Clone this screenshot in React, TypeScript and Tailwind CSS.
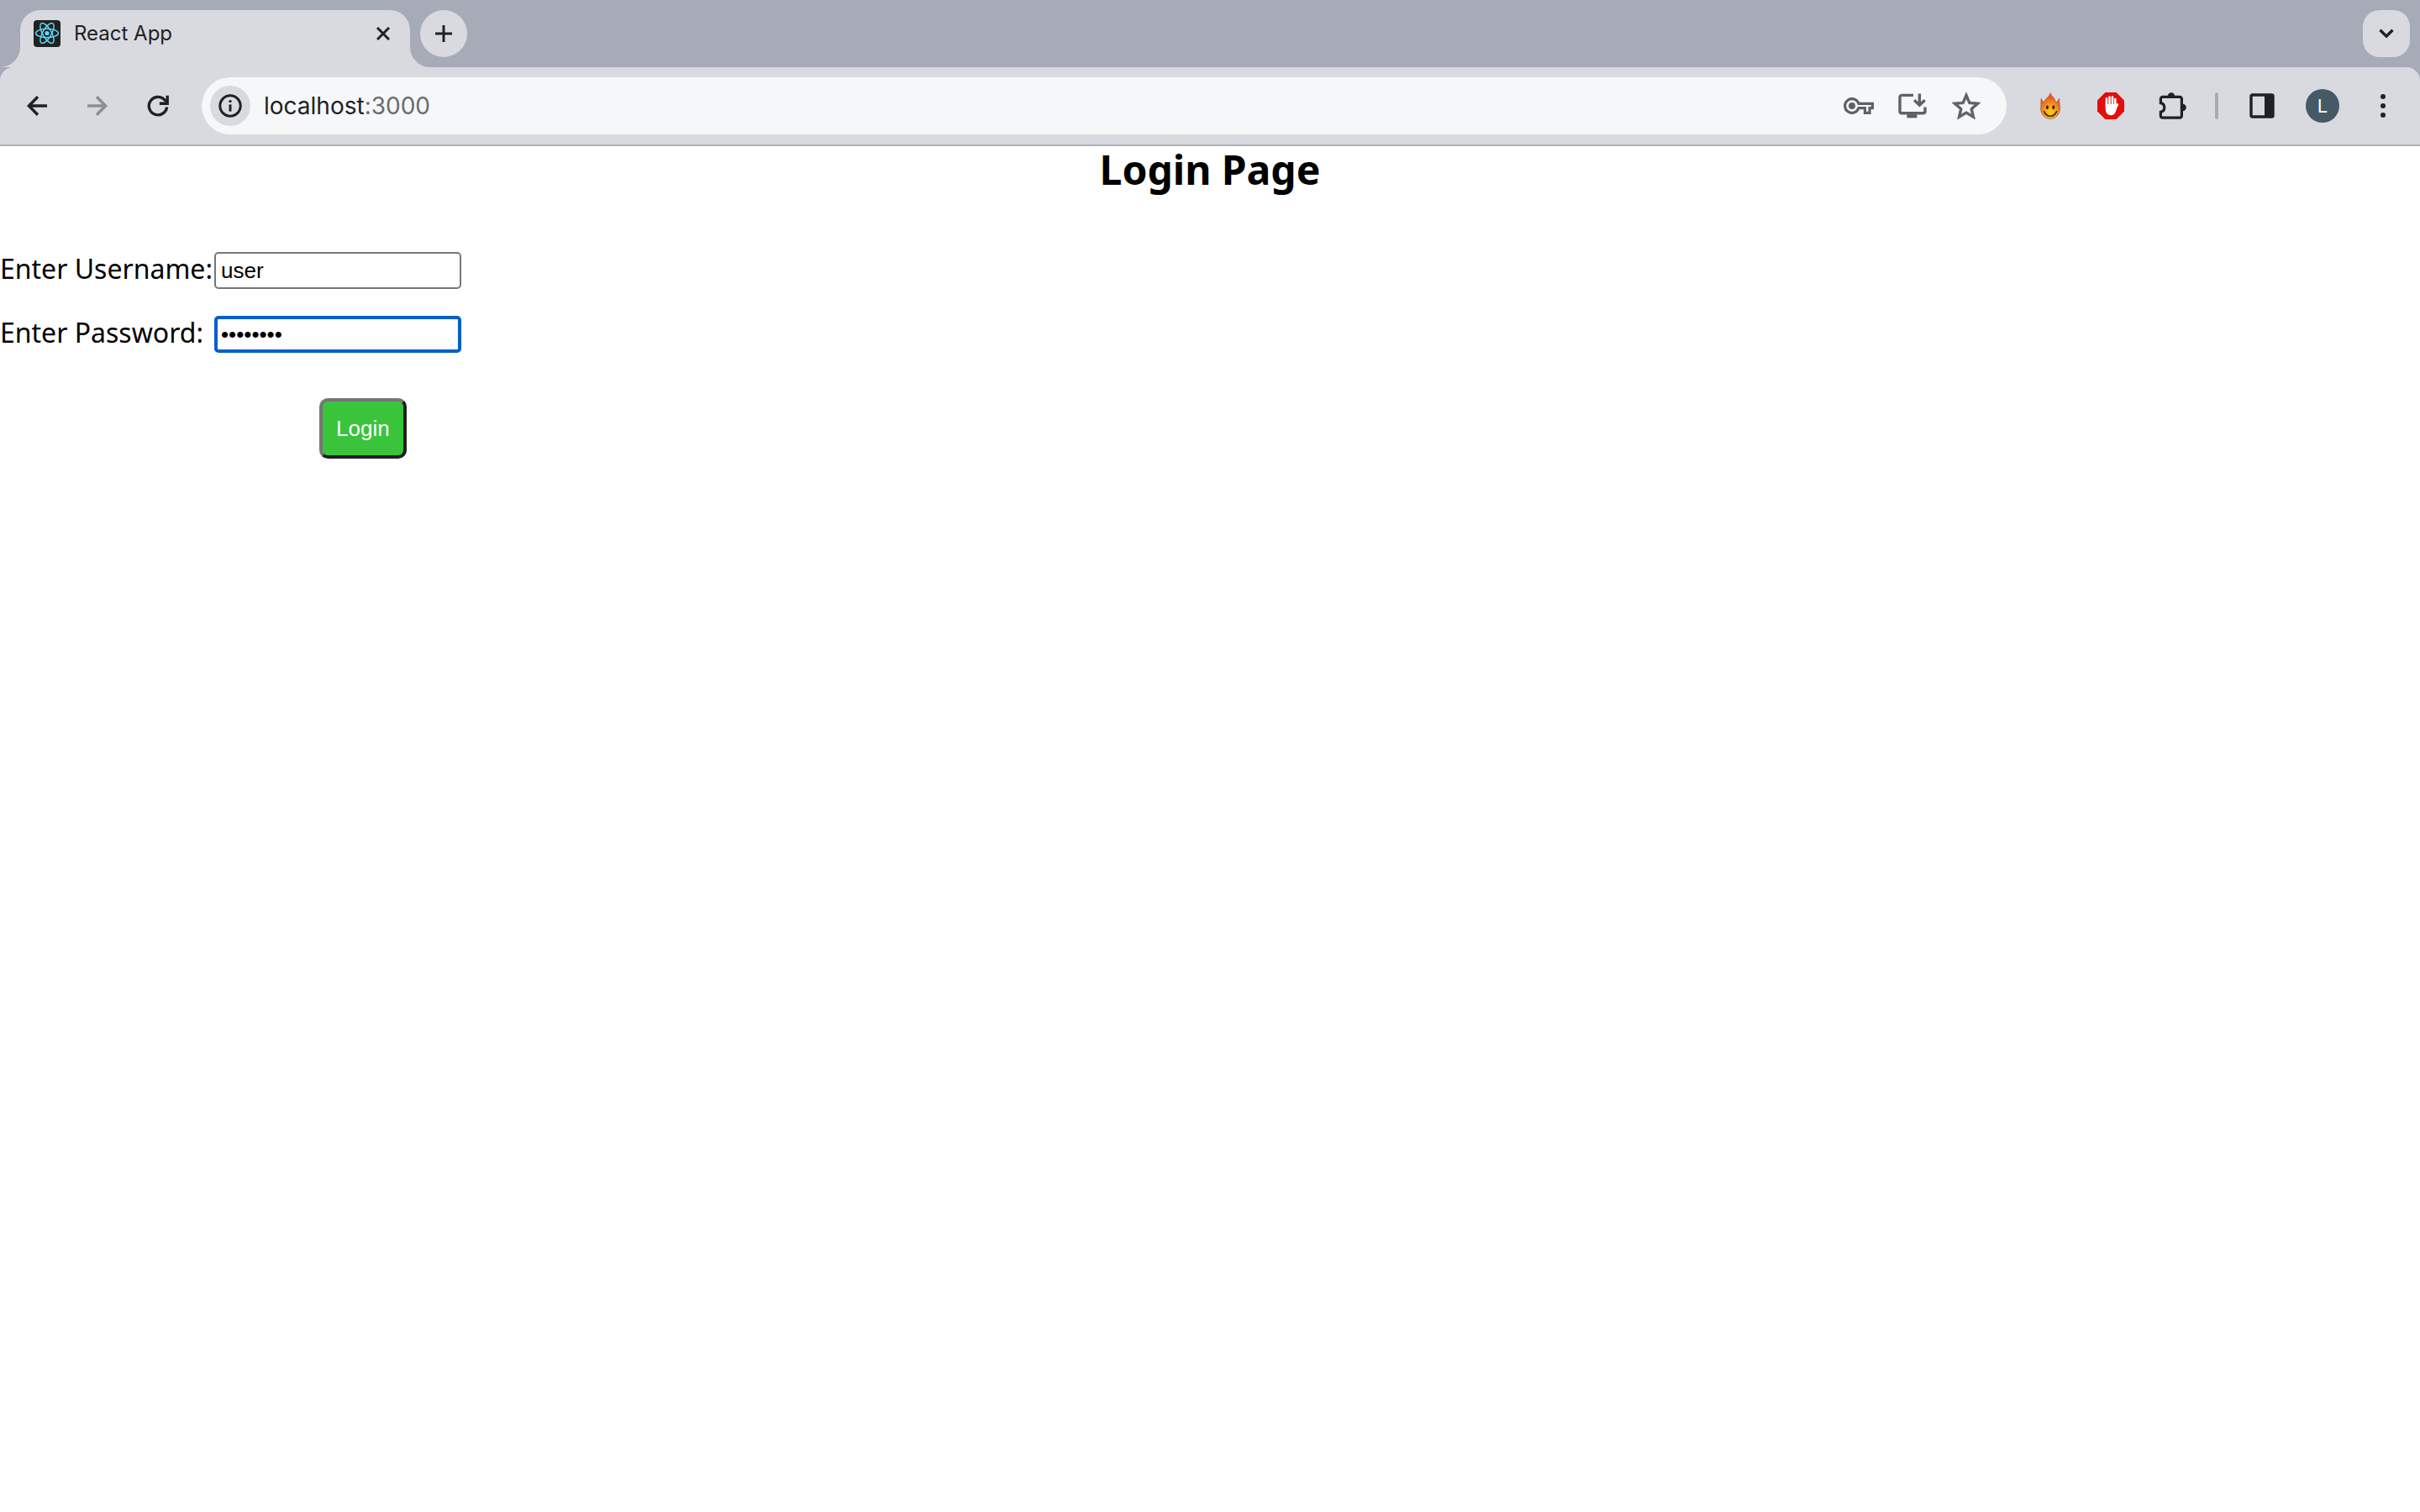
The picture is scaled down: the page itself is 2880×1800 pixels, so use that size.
import React, { useState } from "react";

const svgProps = {
  xmlns: "http://www.w3.org/2000/svg",
  fill: "none",
  "aria-hidden": true,
} as const;

function ReactLogo() {
  return (
    <svg {...svgProps} viewBox="0 0 32 32" className="size-8 shrink-0">
      <rect width="32" height="32" rx="4" fill="#222222" />
      <g stroke="#61dafb" strokeWidth="1.4">
        <ellipse cx="16" cy="15.5" rx="13.5" ry="5.2" />
        <ellipse cx="16" cy="15.5" rx="13.5" ry="5.2" transform="rotate(60 16 15.5)" />
        <ellipse cx="16" cy="15.5" rx="13.5" ry="5.2" transform="rotate(120 16 15.5)" />
      </g>
      <circle cx="16" cy="15.5" r="2.6" fill="#61dafb" />
    </svg>
  );
}

function BackIcon() {
  return (
    <svg {...svgProps} viewBox="0 0 24 24" className="size-6" stroke="currentColor" strokeWidth="3.4">
      <path d="M24 12H3M13 1.2 2.4 12 13 22.8" />
    </svg>
  );
}

function ForwardIcon() {
  return (
    <svg {...svgProps} viewBox="0 0 24 24" className="size-6" stroke="currentColor" strokeWidth="3.4">
      <path d="M0 12h21M11 1.2 21.6 12 11 22.8" />
    </svg>
  );
}

function ReloadIcon() {
  return (
    <svg {...svgProps} viewBox="0 0 26 26" className="size-6.5" stroke="currentColor" strokeWidth="3.4">
      <path d="M23.6 14.5A10.7 10.7 0 1 1 20.6 5.6L24 9.2" />
      <path d="M24.2 .8v9.4H14.8" />
    </svg>
  );
}

function InfoIcon() {
  return (
    <svg {...svgProps} viewBox="0 0 28 28" className="size-7">
      <circle cx="14" cy="14" r="12.2" stroke="currentColor" strokeWidth="3" />
      <circle cx="14" cy="8.6" r="1.7" fill="currentColor" />
      <path d="M14 12.4v8.2" stroke="currentColor" strokeWidth="3" />
    </svg>
  );
}

function KeyIcon() {
  return (
    <svg {...svgProps} viewBox="0 0 36 20" className="h-5 w-9">
      <path
        d="M18 7.400A8.400 8.400 0 1 0 18 12.600H25.400V18.400H31V12.600H34.400V7.400Z"
        stroke="currentColor"
        strokeWidth="3.200"
      />
      <circle cx="10" cy="10" r="4" fill="currentColor" />
    </svg>
  );
}

function InstallIcon() {
  return (
    <svg {...svgProps} viewBox="0 0 34 30" className="h-7.5 w-8.5">
      <path d="M18 2.4H4.4a2.4 2.4 0 0 0-2.4 2.4V21.4a2.4 2.4 0 0 0 2.4 2.4H29.6a2.4 2.4 0 0 0 2.4-2.4V16.6" stroke="currentColor" strokeWidth="3.4" />
      <path d="M10.400 24h12v5.400h-12z" fill="currentColor" />
      <path d="M25.400 .4v13M19.200 8.200l6.200 6 6.400-6" stroke="currentColor" strokeWidth="3.400" />
    </svg>
  );
}

function StarIcon() {
  return (
    <svg {...svgProps} viewBox="2 2 20 19" className="h-8 w-8.5" preserveAspectRatio="none">
      <path
        d="M22 9.24l-7.19-.62L12 2 9.19 8.63 2 9.24l5.46 4.73L5.82 21 12 17.27 18.18 21l-1.63-7.03L22 9.24zM12 15.4l-3.76 2.27 1-4.28-3.32-2.88 4.38-.38L12 6.1l1.71 4.04 4.38.38-3.32 2.88 1 4.28L12 15.4z"
        fill="currentColor"
        stroke="currentColor"
        strokeWidth=".4"
      />
    </svg>
  );
}

function FlameIcon() {
  return (
    <svg {...svgProps} viewBox="0 0 26 32" className="h-8 w-6.5">
      <defs>
        <radialGradient id="flame" cx="0.5" cy="0.78" r="0.66">
          <stop offset="0" stopColor="#ffd012" />
          <stop offset="0.5" stopColor="#fb9a1c" />
          <stop offset="1" stopColor="#e2501c" />
        </radialGradient>
      </defs>
      <path
        d="M13.200 .6C13.600 4.600 19 6 19.400 12.200C21.600 11 22.600 9.200 23.600 7C23.800 10.600 24 12.600 24.400 15.400C25.800 24.600 20.600 31.400 13 31.400S.6 24.600 1.800 16.400C2.200 13.400 1.600 10.600 2.200 7C3 9.200 3.800 10.600 5.600 11.800C7.200 6.600 12.200 5.400 13.200 .6Z"
        fill="url(#flame)"
        stroke="#9a6448"
        strokeWidth=".7"
      />
      <ellipse cx="9.400" cy="17.800" rx="1.500" ry="2.400" fill="#222" />
      <ellipse cx="16.800" cy="17.800" rx="1.500" ry="2.400" fill="#222" />
      <path d="M5.600 22.600c3 7.400 12 7.400 15 0" stroke="#3a2410" strokeWidth="1.500" strokeLinecap="round" />
    </svg>
  );
}

function BlockerIcon() {
  return (
    <svg {...svgProps} viewBox="0 0 32 32" className="size-8">
      <path d="M9.400 0h13.200L32 9.400v13.200L22.600 32H9.400L0 22.600V9.400Z" fill="#e40d0d" />
      <g stroke="#fff" strokeWidth="2.600" strokeLinecap="round">
        <path d="M11 17V7.400M14.500 16V5.600M18 16V5.600M21.300 17V8M21 20.500l3-6.200" />
      </g>
      <path d="M9.700 14h12.900l.6 3c-.6 5.600-2.600 10.200-6.800 10.200-4.600 0-6.700-3.600-6.700-8Z" fill="#fff" />
    </svg>
  );
}

function PuzzleIcon() {
  return (
    <svg {...svgProps} viewBox="0 0 34 34" className="size-8.5">
      <path
        d="M4.600 6.400H25.200a2.200 2.200 0 0 1 2.200 2.200V29a2.200 2.200 0 0 1-2.200 2.200H4.600A2.200 2.200 0 0 1 2.400 29V24.200a5.400 5.400 0 0 0 0-10.600V8.600A2.200 2.200 0 0 1 4.600 6.400Z"
        stroke="currentColor"
        strokeWidth="3.200"
      />
      <path d="M10.800 5.400a4.200 4.200 0 0 1 8.400 0ZM28.600 14.800a4.200 4.200 0 0 1 0 8.400Z" fill="currentColor" />
    </svg>
  );
}

function SidePanelIcon() {
  return (
    <svg {...svgProps} viewBox="0 0 30 30" className="size-7.5">
      <rect x="2" y="2" width="26" height="26" rx="1.500" stroke="currentColor" strokeWidth="3.400" />
      <path d="M18 2h10v26H18z" fill="currentColor" />
    </svg>
  );
}

function IconButton({ label, children, className = "" }: { label: string; children: React.ReactNode; className?: string }) {
  return (
    <button type="button" aria-label={label} className={`flex size-14 shrink-0 items-center justify-center rounded-full ${className}`}>
      {children}
    </button>
  );
}

function TabStrip() {
  return (
    <div className="flex h-20 items-start bg-[#a7abb7] pt-3 pr-3">
      <div className="flex h-17 w-6 shrink-0 items-end bg-[#d9dadf]">
        <div className="h-full w-full rounded-br-3xl bg-[#a7abb7]" />
      </div>
      <div className="flex h-17 w-[464px] items-center rounded-t-3xl bg-[#d9dadf] pr-5 pb-3 pl-4">
        <ReactLogo />
        <span className="ml-4 flex-1 text-2xl text-[#202124]">React App</span>
        <button type="button" aria-label="Close tab" className="flex size-6 items-center justify-center text-[#202124]">
          <svg {...svgProps} viewBox="0 0 16 16" className="size-4" stroke="currentColor" strokeWidth="3">
            <path d="M1 1l14 14M15 1 1 15" />
          </svg>
        </button>
      </div>
      <div className="h-17 w-3 shrink-0 bg-[#a7abb7]">
        <svg {...svgProps} viewBox="0 0 24 68" className="h-17 w-6">
          <path d="M0 44v24h24A24 24 0 0 1 0 44Z" fill="#d9dadf" />
        </svg>
      </div>
      <IconButton label="New tab" className="bg-[#d9dadf] text-[#202124]">
        <svg {...svgProps} viewBox="0 0 20 20" className="size-5" stroke="currentColor" strokeWidth="3">
          <path d="M10 0v20M0 10h20" />
        </svg>
      </IconButton>
      <button type="button" aria-label="Search tabs" className="ml-auto flex size-14 items-center justify-center rounded-[20px] bg-[#d9dadf] text-[#202124]">
        <svg {...svgProps} viewBox="0 0 18 12" className="h-3 w-4.5" stroke="currentColor" strokeWidth="3.400">
          <path d="M1.500 1.700 9 9.200l7.500-7.500" />
        </svg>
      </button>
    </div>
  );
}

function Toolbar() {
  const [url, setUrl] = useState("localhost:3000");
  const [host, ...rest] = url.split(":");
  return (
    <div className="bg-[#a7abb7]">
      <div className="flex h-[94px] items-center rounded-t-2xl border-b-2 border-[#adafb4] bg-[#d9dadf] pr-4 pl-4 text-[#202124]">
        <div className="flex gap-4">
          <IconButton label="Back"><BackIcon /></IconButton>
          <IconButton label="Forward" className="text-[#8c8e92]"><ForwardIcon /></IconButton>
          <IconButton label="Reload"><ReloadIcon /></IconButton>
        </div>
        <div className="ml-6 flex h-17 flex-1 items-center rounded-full bg-[#f5f7f9] pr-5 pl-2.5">
          <button type="button" aria-label="Site information" className="flex size-12 items-center justify-center rounded-full bg-[#d9dadf]">
            <InfoIcon />
          </button>
          <div className="relative ml-4 flex-1 text-[28px]">
            <div aria-hidden="true">
              {host}
              <span className="text-[#6a6c70]">{rest.length > 0 ? ":" + rest.join(":") : ""}</span>
            </div>
            <input
              aria-label="Address"
              value={url}
              onChange={(e) => setUrl(e.target.value)}
              className="absolute inset-0 w-full bg-transparent text-transparent caret-black outline-none"
            />
          </div>
          <div className="flex gap-2 text-[#5f6165]">
            <IconButton label="Passwords"><KeyIcon /></IconButton>
            <IconButton label="Install app"><InstallIcon /></IconButton>
            <IconButton label="Bookmark"><StarIcon /></IconButton>
          </div>
        </div>
        <div className="ml-6 flex items-center">
          <div className="flex gap-4">
            <IconButton label="Flame extension"><FlameIcon /></IconButton>
            <IconButton label="Ad blocker"><BlockerIcon /></IconButton>
            <IconButton label="Extensions" className="pl-1"><PuzzleIcon /></IconButton>
          </div>
          <div className="mx-6 h-8 w-1 rounded-full bg-[#a7abb7]" />
          <div className="flex gap-4">
            <IconButton label="Side panel"><SidePanelIcon /></IconButton>
            <IconButton label="Profile">
              <span className="flex size-10 items-center justify-center rounded-full bg-[#455a64] text-[22px] text-white">L</span>
            </IconButton>
            <IconButton label="Menu">
              <svg {...svgProps} viewBox="0 0 6 28" className="h-7 w-1.5" fill="currentColor">
                <circle cx="3" cy="3" r="3" />
                <circle cx="3" cy="14" r="3" />
                <circle cx="3" cy="25" r="3" />
              </svg>
            </IconButton>
          </div>
        </div>
      </div>
    </div>
  );
}

function LoginPage() {
  const [username, setUsername] = useState("user");
  const [password, setPassword] = useState("password");
  return (
    <main className="font-['Noto_Sans',sans-serif] text-black">
      <h1 className="text-center text-5xl leading-14 font-bold">Login Page</h1>
      <form className="mt-[70px]" onSubmit={(e) => e.preventDefault()}>
        <div className="grid grid-cols-[255px_294px] items-start gap-y-8">
          <label htmlFor="username" className="text-[32px] leading-10 whitespace-nowrap">Enter Username:</label>
          <input
            id="username"
            type="text"
            value={username}
            onChange={(e) => setUsername(e.target.value)}
            className="h-11 rounded-[5px] border-2 border-[#767676] bg-white px-1.5 font-['Liberation_Sans',sans-serif] text-[26px] outline-none"
          />
          <label htmlFor="password" className="text-[32px] leading-10 whitespace-nowrap">Enter Password:</label>
          <input
            id="password"
            type="password"
            value={password}
            onChange={(e) => setPassword(e.target.value)}
            className="h-11 rounded-[5px] border-4 border-[#005fcc] bg-white px-1 font-['Liberation_Sans',sans-serif] text-[26px] outline-none"
          />
        </div>
        <button
          type="submit"
          className="mt-[54px] ml-[380px] h-[72px] rounded-[10px] border-4 border-t-[#767676] border-r-[#212121] border-b-[#212121] border-l-[#767676] bg-[#3ac43c] px-4 font-['Liberation_Sans',sans-serif] text-[26px] text-white"
        >
          Login
        </button>
      </form>
    </main>
  );
}

export default function App() {
  return (
    <div className="min-h-screen bg-white font-['Inter',sans-serif]">
      <header>
        <TabStrip />
        <Toolbar />
      </header>
      <LoginPage />
    </div>
  );
}
